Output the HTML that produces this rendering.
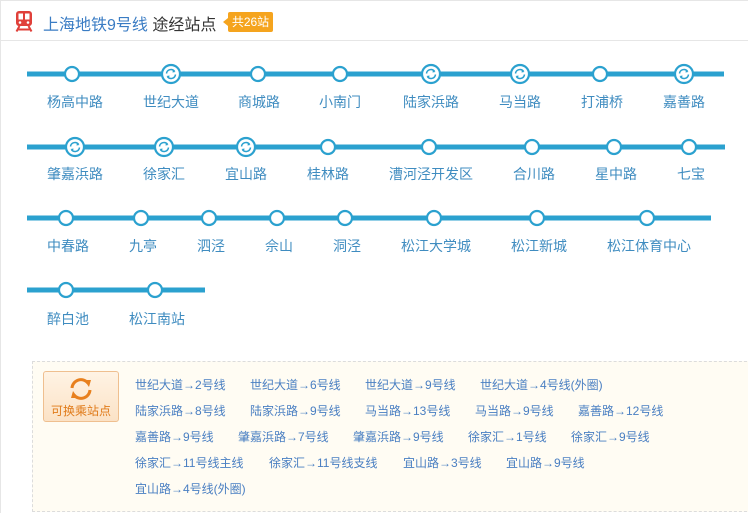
<!DOCTYPE html>
<html><head><meta charset="utf-8"><style>
*{margin:0;padding:0;box-sizing:border-box}
html,body{width:748px;height:513px;overflow:hidden}
body{background:#fff;font-family:"Liberation Sans","Noto Sans CJK SC",sans-serif;position:relative}
.frame{position:absolute;left:0;top:0;width:748px;height:513px;border-left:1px solid #e6e6e6;border-top:1px solid #e6e6e6}
.hdr{position:absolute;left:1px;top:1px;width:747px;height:40px;border-bottom:1px solid #e6e6e6;background:#fff}
.t1{position:absolute;left:43px;top:11px;font-size:16px;color:#3a7cc4;white-space:nowrap}
.t1 span{color:#333}
.badge{position:absolute;left:228px;top:12px;width:45px;height:20px;background:#f5a41e;color:#fff;font-size:12px;line-height:20px;text-align:center;border-radius:2px}
.badge:before{content:"";position:absolute;left:-5px;top:6px;border-right:5px solid #f5a41e;border-top:4px solid transparent;border-bottom:4px solid transparent}
.lb{position:absolute;font-size:14px;color:#3f8cc0;white-space:nowrap;transform:translateX(-50%)}
.box{position:absolute;left:32px;top:361px;width:730px;height:151px;border:1px dashed #dcdcdc;background:#fffcf3}
.btn{position:absolute;left:43px;top:371px;width:76px;height:51px;border:1px solid #efbf8f;border-radius:3px;background:linear-gradient(#fff3e4,#fbe2c6)}
.btn div{position:absolute;left:0;width:74px;top:30px;text-align:center;font-size:12px;color:#e07b1a}
.lk{position:absolute;font-size:12px;color:#4a7fc2;white-space:nowrap}
</style></head><body>
<div class="frame"></div>
<div class="hdr"></div>
<svg style="position:absolute;left:15px;top:11px" width="18" height="21" viewBox="0 0 18 21"><rect x="1" y="0" width="16" height="15" rx="3" fill="#e0403a"/><rect x="3.5" y="2.5" width="4.5" height="6" fill="#fff"/><rect x="10" y="2.5" width="4.5" height="6" fill="#fff"/><circle cx="5" cy="11.5" r="1.3" fill="#fff"/><circle cx="13" cy="11.5" r="1.3" fill="#fff"/><path d="M4.5 15 L1.5 20.5 M13.5 15 L16.5 20.5 M3 18.5 H15" stroke="#e0403a" stroke-width="2"/></svg>
<div class="t1">上海地铁9号线 <span>途经站点</span></div>
<div class="badge">共26站</div>
<svg style="position:absolute;left:0;top:0" width="748" height="330">
<defs>
<g id="n"><circle r="7" fill="#fff" stroke="#2ba1cf" stroke-width="2.2"/></g>
<g id="x"><circle r="9" fill="#fff" stroke="#2ba1cf" stroke-width="2.2"/><path d="M-4.5 -0.5 A4.5 4.5 0 0 1 3.5 -2.8" fill="none" stroke="#2ba1cf" stroke-width="1.5"/><path d="M4.5 0.5 A4.5 4.5 0 0 1 -3.5 2.8" fill="none" stroke="#2ba1cf" stroke-width="1.5"/><path d="M2 -4.5 L4.5 -2 L1.5 -1.5Z M-2 4.5 L-4.5 2 L-1.5 1.5Z" fill="#2ba1cf"/></g>
</defs>
<g fill="#2ba1cf"><rect x="27" y="71.5" width="697" height="5"/><rect x="27" y="144.5" width="698" height="5"/><rect x="27" y="215.5" width="684" height="5"/><rect x="27" y="287.5" width="178" height="5"/></g>
<use href="#n" x="72" y="74"/><use href="#x" x="171" y="74"/><use href="#n" x="258" y="74"/><use href="#n" x="340" y="74"/><use href="#x" x="431" y="74"/><use href="#x" x="520" y="74"/><use href="#n" x="600" y="74"/><use href="#x" x="684" y="74"/>
<use href="#x" x="75" y="147"/><use href="#x" x="164" y="147"/><use href="#x" x="246" y="147"/><use href="#n" x="328" y="147"/><use href="#n" x="429" y="147"/><use href="#n" x="532" y="147"/><use href="#n" x="614" y="147"/><use href="#n" x="689" y="147"/>
<use href="#n" x="66" y="218"/><use href="#n" x="141" y="218"/><use href="#n" x="209" y="218"/><use href="#n" x="277" y="218"/><use href="#n" x="345" y="218"/><use href="#n" x="434" y="218"/><use href="#n" x="537" y="218"/><use href="#n" x="647" y="218"/>
<use href="#n" x="66" y="290"/><use href="#n" x="155" y="290"/>
</svg>
<div class="lb" style="left:75px;top:92px">杨高中路</div><div class="lb" style="left:171px;top:92px">世纪大道</div><div class="lb" style="left:259px;top:92px">商城路</div><div class="lb" style="left:340px;top:92px">小南门</div><div class="lb" style="left:431px;top:92px">陆家浜路</div><div class="lb" style="left:520px;top:92px">马当路</div><div class="lb" style="left:602px;top:92px">打浦桥</div><div class="lb" style="left:684px;top:92px">嘉善路</div>
<div class="lb" style="left:75px;top:164px">肇嘉浜路</div><div class="lb" style="left:164px;top:164px">徐家汇</div><div class="lb" style="left:246px;top:164px">宜山路</div><div class="lb" style="left:328px;top:164px">桂林路</div><div class="lb" style="left:431px;top:164px">漕河泾开发区</div><div class="lb" style="left:534px;top:164px">合川路</div><div class="lb" style="left:616px;top:164px">星中路</div><div class="lb" style="left:691px;top:164px">七宝</div>
<div class="lb" style="left:68px;top:236px">中春路</div><div class="lb" style="left:143px;top:236px">九亭</div><div class="lb" style="left:211px;top:236px">泗泾</div><div class="lb" style="left:279px;top:236px">佘山</div><div class="lb" style="left:347px;top:236px">洞泾</div><div class="lb" style="left:436px;top:236px">松江大学城</div><div class="lb" style="left:539px;top:236px">松江新城</div><div class="lb" style="left:649px;top:236px">松江体育中心</div>
<div class="lb" style="left:68px;top:309px">醉白池</div><div class="lb" style="left:157px;top:309px">松江南站</div>
<div class="box"></div>
<div class="btn"><svg style="position:absolute;left:24px;top:5px" width="26" height="24" viewBox="0 0 26 24"><path d="M4 11 A9 9 0 0 1 20 6" fill="none" stroke="#e8801e" stroke-width="3"/><path d="M22 13 A9 9 0 0 1 6 18" fill="none" stroke="#e8801e" stroke-width="3"/><path d="M16 3 L23 3 L21 10Z M10 21 L3 21 L5 14Z" fill="#e8801e"/></svg><div>可换乘站点</div></div>
<div class="lk" style="left:135px;top:376px">世纪大道→2号线</div><div class="lk" style="left:250px;top:376px">世纪大道→6号线</div><div class="lk" style="left:365px;top:376px">世纪大道→9号线</div><div class="lk" style="left:480px;top:376px">世纪大道→4号线(外圈)</div>
<div class="lk" style="left:135px;top:402px">陆家浜路→8号线</div><div class="lk" style="left:250px;top:402px">陆家浜路→9号线</div><div class="lk" style="left:365px;top:402px">马当路→13号线</div><div class="lk" style="left:475px;top:402px">马当路→9号线</div><div class="lk" style="left:578px;top:402px">嘉善路→12号线</div>
<div class="lk" style="left:135px;top:428px">嘉善路→9号线</div><div class="lk" style="left:238px;top:428px">肇嘉浜路→7号线</div><div class="lk" style="left:353px;top:428px">肇嘉浜路→9号线</div><div class="lk" style="left:468px;top:428px">徐家汇→1号线</div><div class="lk" style="left:571px;top:428px">徐家汇→9号线</div>
<div class="lk" style="left:135px;top:454px">徐家汇→11号线主线</div><div class="lk" style="left:269px;top:454px">徐家汇→11号线支线</div><div class="lk" style="left:403px;top:454px">宜山路→3号线</div><div class="lk" style="left:506px;top:454px">宜山路→9号线</div>
<div class="lk" style="left:135px;top:480px">宜山路→4号线(外圈)</div>
</body></html>
